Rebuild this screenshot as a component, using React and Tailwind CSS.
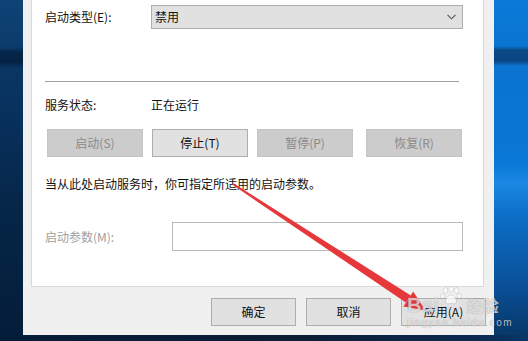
import React from "react";

const font = "font-['Microsoft_YaHei','Noto_Sans_CJK_SC',sans-serif]";

const WinButton = ({ label, disabled, className = "" }) => (
  <div
    className={`flex items-center justify-center h-[28px] border text-[12px] ${
      disabled
        ? "bg-[#cccccc] border-[#c4c4c4] text-[#8a8a8a]"
        : "bg-[#e1e1e1] border-[#adadad] text-[#111]"
    } ${className}`}
  >
    {label}
  </div>
);

const Arrow = () => (
  <svg
    className="absolute left-0 top-0 pointer-events-none"
    width="528"
    height="341"
    viewBox="0 0 528 341"
  >
    <polygon
      points="232.5,184.8 233.5,183.2 410.8,295.5 405.8,302.5"
      fill="#e6383b"
    />
    <polygon points="403.4,306.4 413.2,291.6 425.5,310.5" fill="#e6383b" />
  </svg>
);

const Watermark = () => (
  <div className="absolute left-[407px] top-[286px] pointer-events-none text-white/70 [text-shadow:0_0_1px_rgba(0,0,0,0.4)]">
    <div className="flex items-end">
      <span className="text-[20px] leading-[20px] font-['Liberation_Sans',sans-serif] font-bold tracking-[0.5px]">
        Bai
      </span>
      <svg width="22" height="20" viewBox="0 0 24 22" className="mb-[9px] opacity-70">
        <g fill="#ffffff" stroke="rgba(0,0,0,0.3)" strokeWidth="0.6">
          <ellipse cx="6" cy="5" rx="2.4" ry="3.2" />
          <ellipse cx="12" cy="3.5" rx="2.4" ry="3.2" />
          <ellipse cx="18" cy="5" rx="2.4" ry="3.2" />
          <ellipse cx="3" cy="11" rx="2.2" ry="2.8" />
          <ellipse cx="21" cy="11" rx="2.2" ry="2.8" />
          <path d="M12 10 C8 10 6 15 6 17 C6 20 9 20 12 19 C15 20 18 20 18 17 C18 15 16 10 12 10 Z" />
        </g>
      </svg>
      <span className="ml-[5px] mb-[1px] text-[16px] leading-[18px] font-['Noto_Sans_CJK_SC',sans-serif] font-bold">
        经验
      </span>
    </div>
    <div className="mt-[3px] text-[10px] leading-[10px] tracking-[1.5px] font-['Liberation_Sans',sans-serif]">
      jingyan.baidu.com
    </div>
  </div>
);

export default function App() {
  return (
    <div className={`relative w-[528px] h-[341px] overflow-hidden ${font}`}>
      <div className="flex h-[335px]">
        {/* desktop, left */}
        <div className="w-[23px] bg-[linear-gradient(180deg,#0e4376_0px,#0c3c6b_47px,#06264a_52px,#052141_62px,#0a3664_68px,#08305d_120px,#062749_200px,#041d3a_335px)]" />

        {/* dialog */}
        <div className="w-[471px] bg-[#f0f0f0] flex flex-col pl-[8px] pr-[10px]">
          <div className="bg-white border-x border-b border-[#d9d9d9] pl-[13px] pr-[20px] pt-[5px] pb-[35px] text-[12px] text-[#111]">
            <div className="flex items-center h-[24px]">
              <div className="w-[106px]">启动类型(E):</div>
              <div className="flex-1 h-[24px] bg-[#e1e1e1] border border-[#adadad] flex items-center justify-between pl-[3px] pr-[6px]">
                <span>禁用</span>
                <svg width="9" height="6" viewBox="0 0 9 6">
                  <path d="M0.5 0.8 L4.5 4.8 L8.5 0.8" fill="none" stroke="#555" strokeWidth="1.1" />
                </svg>
              </div>
            </div>

            <div className="mt-[52px] mr-[4px] h-px bg-[#a0a0a0]" />

            <div className="mt-[13px] flex items-center h-[20px]">
              <div className="w-[106px]">服务状态:</div>
              <div>正在运行</div>
            </div>

            <div className="mt-[14px] flex pl-[2px]">
              <WinButton label="启动(S)" disabled className="w-[96px]" />
              <WinButton label="停止(T)" className="w-[96px] ml-[9px]" />
              <WinButton label="暂停(P)" disabled className="w-[96px] ml-[9px]" />
              <WinButton label="恢复(R)" disabled className="w-[96px] ml-[13px]" />
            </div>

            <div className="mt-[17px] h-[20px] flex items-center">
              当从此处启动服务时，你可指定所适用的启动参数。
            </div>

            <div className="mt-[28px] flex items-center h-[29px]">
              <div className="w-[127px] text-[#a0a0a0]">启动参数(M):</div>
              <div className="flex-1 h-[29px] border border-[#b9b9b9] bg-white" />
            </div>
          </div>

          <div className="mt-[11px] flex justify-end">
            <WinButton label="确定" className="w-[85px]" />
            <WinButton label="取消" className="w-[85px] ml-[10px]" />
            <WinButton label="应用(A)" className="w-[85px] ml-[10px] mr-[-2px]" />
          </div>
        </div>

        {/* desktop, right */}
        <div className="flex-1 bg-[linear-gradient(180deg,#0a79d7_0px,#0a76d3_46px,#0a4a88_50px,#0a4682_61px,#0a74d0_66px,#0a78d6_165px,#1a88e2_182px,#0b6cc4_220px,#0a5099_285px,#073868_335px)]" />
      </div>

      {/* desktop, bottom */}
      <div className="h-[6px] bg-[linear-gradient(90deg,#041c38_0px,#0a1d36_300px,#0a2a52_480px,#083868_528px)]" />

      <Arrow />
      <Watermark />
    </div>
  );
}
